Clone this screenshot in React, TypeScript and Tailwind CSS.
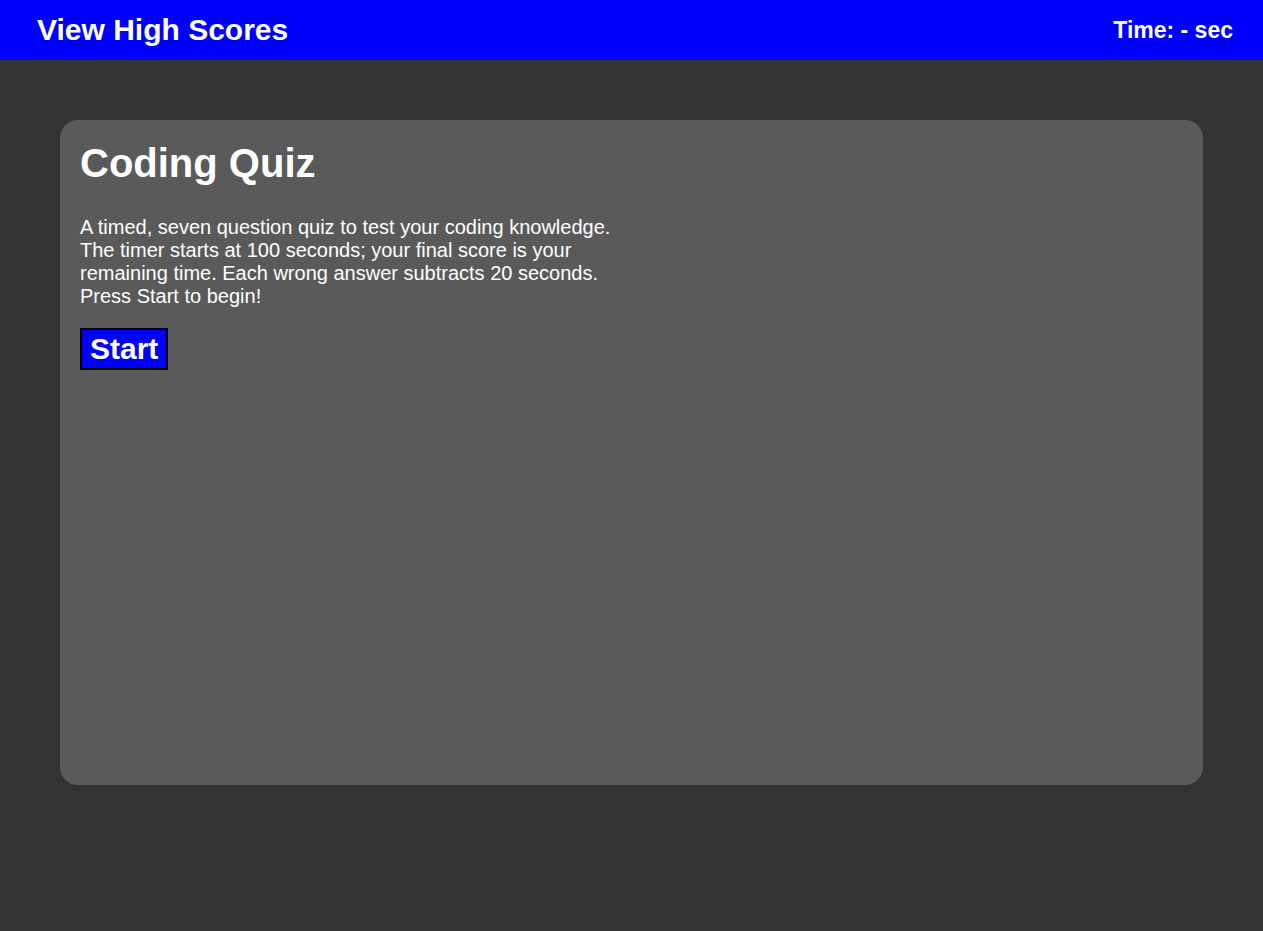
export default function App() {
  return (
    <div className="min-h-[931px] bg-[#333333] text-white" style={{ fontFamily: '"Liberation Sans", Arial, sans-serif' }}>
      <header className="flex h-[60px] items-center justify-between bg-[#0000ff] pl-[37px] pr-[30px]">
        <span className="text-[30px] font-bold leading-none">View High Scores</span>
        <span className="text-[23px] font-bold leading-none">Time: - sec</span>
      </header>
      <main className="px-[60px] pt-[60px]">
        <div className="h-[665px] rounded-[18px] bg-[#5a5a5a] p-[20px]">
          <h1 className="text-[40px] font-bold leading-[46px]">Coding Quiz</h1>
          <p className="mt-[30px] max-w-[550px] text-[20px] leading-[23px]">
            A timed, seven question quiz to test your coding knowledge. The timer starts at 100 seconds; your final score is your remaining time. Each wrong answer subtracts 20 seconds. Press Start to begin!
          </p>
          <button className="mt-[20px] border-2 border-black bg-[#0000ff] px-[8px] text-[30px] font-bold leading-[38px] text-white">
            Start
          </button>
        </div>
      </main>
    </div>
  );
}
